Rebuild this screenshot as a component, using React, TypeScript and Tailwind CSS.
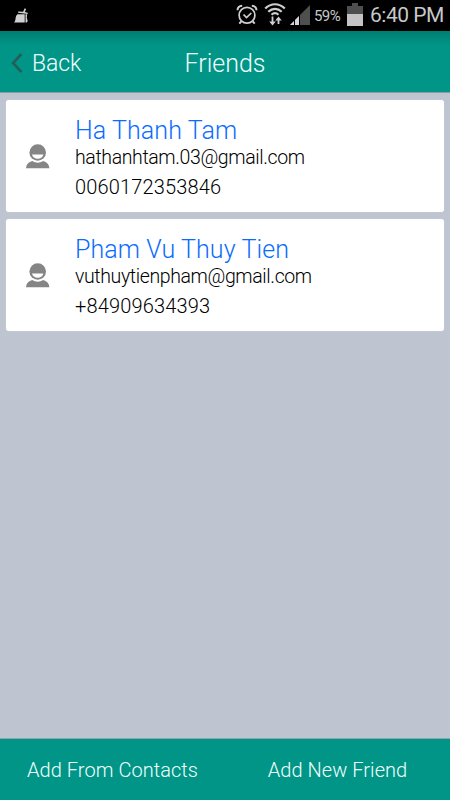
type Friend = {
  name: string;
  email: string;
  phone: string;
};

const friends: Friend[] = [
  {
    name: "Ha Thanh Tam",
    email: "hathanhtam.03@gmail.com",
    phone: "0060172353846",
  },
  {
    name: "Pham Vu Thuy Tien",
    email: "vuthuytienpham@gmail.com",
    phone: "+84909634393",
  },
];

const CleanerIcon = () => (
  <svg width="16" height="16" viewBox="0 0 16 16" fill="#d0d0d0">
    <path d="M10.7.3l1.4.7-1.3 2.900 2.900.8v1.300L4 4.700l.2-1.200 4.900.3z" />
    <path d="M3.500 6.200h7.200v8.300H0c1-1.200 1.300-2.100 1.500-3.600.3-2.400.8-3.900 2-4.700z" />
    <path d="M11.500 6.200h1.700l-.4 3.400.9 3.700-1 1.100h-1.200z" />
  </svg>
);

const AlarmIcon = () => (
  <svg width="22" height="22" viewBox="0 0 22 22" fill="none" stroke="#cfcfcf">
    <circle cx="11" cy="11.300" r="7.900" strokeWidth="1.700" />
    <path d="M7.500 10.500l3 3 4.800-4.500" strokeWidth="1.700" />
    <path d="M1.500 6.300C1.600 3.500 3.500 1.900 6.200 1.800M20.500 6.300c-.1-2.800-2-4.400-4.700-4.500" strokeWidth="2" />
    <path d="M5.300 17.300l-2 2.300M16.700 17.300l2 2.300" strokeWidth="2" />
  </svg>
);

const WifiIcon = () => (
  <svg width="22" height="24" viewBox="0 0 22 24" fill="none" stroke="#cfcfcf">
    <path d="M1.200 6.500C7 .8 15 .8 20.800 6.500" strokeWidth="2.200" />
    <path d="M4.300 9.700c4-3.800 9.400-3.800 13.400 0" strokeWidth="2.200" />
    <path d="M7.500 12.700c2.100-2 4.900-2 7 0" strokeWidth="2.200" />
    <path d="M8.500 14.500v6M14.500 22v-5" strokeWidth="1.800" />
    <path d="M5.200 19.500h6.600l-3.300 4zM11.200 18.500h6.600l-3.300-4z" fill="#cfcfcf" stroke="none" />
  </svg>
);

const SignalIcon = () => (
  <svg width="20" height="20" viewBox="0 0 20 20">
    <path d="M20 0v20H0z" fill="#4f4f4f" />
    <path d="M0 20l4-4v4zM5 20v-5l4-4v9z" fill="#d6d6d6" />
    <path d="M4.500 15v5M9.500 10v10" stroke="#000" />
  </svg>
);

const BatteryIcon = () => (
  <svg width="16" height="23" viewBox="0 0 16 23">
    <path d="M5 0h6v3h5v8H0V3h5z" fill="#4f4f4f" />
    <path d="M0 11h16v12H0z" fill="#c4c4c4" />
  </svg>
);

const PersonIcon = () => (
  <svg width="24" height="25" viewBox="0 0 24 25">
    <circle cx="11.700" cy="8.500" r="8.300" fill="#858585" />
    <path d="M6 10.500h11.400c-.4 2.500-2.800 4.200-5.700 4.200S6.400 13 6 10.500z" fill="#fff" />
    <path d="M0 24.300c.3-3.800 2.500-6.400 6.400-7.200 3.300 2.200 7.300 2.200 10.600 0 3.900.8 6.100 3.400 6.400 7.200z" fill="#858585" />
  </svg>
);

const StatusBar = () => (
  <div className="flex h-[31px] items-start justify-between bg-black font-normal text-[#c8c8c8]">
    <div className="pt-2 pl-3.5">
      <CleanerIcon />
    </div>
    <div className="flex items-start pr-[7px]">
      <div className="pt-1">
        <AlarmIcon />
      </div>
      <div className="ml-[6px] pt-[2px]">
        <WifiIcon />
      </div>
      <div className="ml-[4px] pt-[5px]">
        <SignalIcon />
      </div>
      <span className="ml-1 w-7 pt-[6px] text-[15px] leading-5 tracking-[-0.6px]">59%</span>
      <div className="ml-[5px] pt-[3px]">
        <BatteryIcon />
      </div>
      <span className="ml-[7px] w-[73px] pt-[3px] text-[21px] leading-6 tracking-[-0.5px] whitespace-nowrap">6:40 PM</span>
    </div>
  </div>
);

const Header = () => (
  <header className="grid h-[62px] grid-cols-[1fr_auto_1fr] items-center border-b border-[#8b9c9f] bg-[#009587] bg-[linear-gradient(#007d71,#009587_14px)] text-[#f0fffc]">
    <button className="flex items-center pt-0.5 pl-[11px]">
      <svg width="12" height="20" viewBox="0 0 12 20" fill="none" stroke="#235f59" strokeWidth="2.600">
        <path d="M10.500 1L2 10l8.500 9" />
      </svg>
      <span className="ml-[9px] pt-0.5 text-[23px] leading-8 tracking-[-0.1px]">Back</span>
    </button>
    <h1 className="pt-1 text-[25px] leading-8">Friends</h1>
  </header>
);

const FriendCard = ({ friend }: { friend: Friend }) => (
  <li className="flex h-28 items-center rounded-[3px] bg-white shadow-[0_0_1px_#dce5ec]">
    <div className="w-[69px] shrink-0 pl-5">
      <PersonIcon />
    </div>
    <div className="pt-[3px] whitespace-nowrap text-black">
      <p className="text-[25px] leading-[30px] tracking-[0.1px] text-[#0a6cff]">{friend.name}</p>
      <p className="text-[19.500px] leading-[23px] tracking-[-0.380px]">{friend.email}</p>
      <p className="mt-1.5 text-[20px] leading-6 tracking-[0.15px]">{friend.phone}</p>
    </div>
  </li>
);

const Footer = () => (
  <footer className="grid h-[62px] grid-cols-2 items-center border-t border-[#8ca6ab] bg-[#009587] text-[20px] tracking-[0.05px] text-[#f0fffc]">
    <button className="pt-px">Add From Contacts</button>
    <button className="pt-px">Add New Friend</button>
  </footer>
);

const App = () => {
  return (
    <div className="flex h-[800px] w-[450px] flex-col overflow-hidden bg-[#bec5d1] font-[Roboto,sans-serif] font-light">
      <StatusBar />
      <Header />
      <ul className="flex flex-1 flex-col gap-[7px] px-1.5 pt-[7px]">
        {friends.map((friend) => (
          <FriendCard key={friend.email} friend={friend} />
        ))}
      </ul>
      <Footer />
    </div>
  );
};

export default App;
